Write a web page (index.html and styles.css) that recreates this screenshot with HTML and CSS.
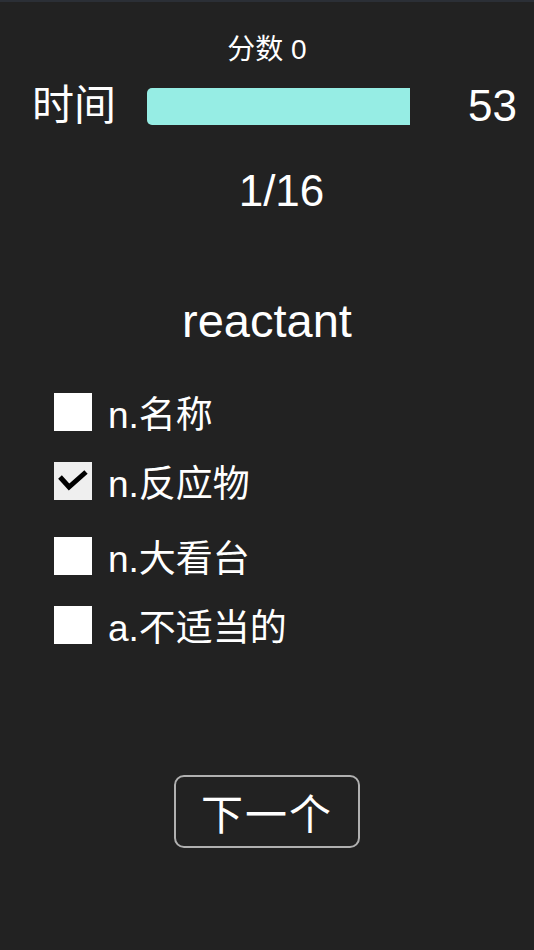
FILE: index.html
```html
<!DOCTYPE html>
<html>

<head>
  <title>单词测验</title>
  <meta charset="UTF-8">
  <link rel="stylesheet" href="styles.css">
</head>

<body>
  <div class="score">分数 0</div>
  <div class="timer">
    <span class="timer-label">时间</span>
    <div class="timer-bar"></div>
    <span class="timer-num">53</span>
  </div>
  <div class="progress">1/16</div>
  <div class="word">reactant</div>
  <ul class="options">
    <li class="option"><span class="box"></span>n.名称</li>
    <li class="option"><span class="box checked">
        <svg width="38" height="38" viewBox="0 0 38 38">
          <path d="M6 15 L15 25 L32 10" fill="none" stroke="#000" stroke-width="5" />
        </svg>
      </span>n.反应物</li>
    <li class="option"><span class="box"></span>n.大看台</li>
    <li class="option"><span class="box"></span>a.不适当的</li>
  </ul>
  <div class="actions">
    <button class="next">下一个</button>
  </div>
</body>

</html>
```

FILE: styles.css
```css
* {
  padding: 0;
  margin: 0;
  box-sizing: border-box;
}

body {
  background-color: #222222;
  border-top: 2px solid #2b2f36;
  color: #ffffff;
  font-family: "Liberation Sans", "Noto Sans CJK SC", sans-serif;
  height: 950px;
}

.score {
  margin-top: 33px;
  font-size: 28px;
  line-height: 30px;
  text-align: center;
}

.timer {
  margin-top: 21px;
  height: 40px;
  display: flex;
  align-items: center;
  padding: 0 17px 0 32px;
}

.timer-label {
  font-size: 42px;
  line-height: 40px;
}

.timer-bar {
  margin-left: 31px;
  width: 263px;
  height: 37px;
  background-color: #96ede4;
  border-radius: 5px 0 0 5px;
}

.timer-num {
  flex: 1;
  text-align: right;
  font-size: 44px;
  line-height: 40px;
}

.progress {
  margin-top: 40px;
  padding-left: 29px;
  font-size: 44px;
  line-height: 50px;
  text-align: center;
}

.word {
  margin-top: 80px;
  font-size: 47px;
  line-height: 50px;
  text-align: center;
}

.options {
  list-style: none;
  margin-top: 47px;
  padding-left: 54px;
  display: flex;
  flex-direction: column;
  gap: 31px;
}

.option {
  display: flex;
  align-items: center;
  height: 38px;
  font-size: 37px;
}

.option:nth-child(3) {
  margin-top: 6px;
}

.box {
  width: 38px;
  height: 38px;
  margin-right: 16px;
  background-color: #ffffff;
}

.box.checked {
  background-color: #efefef;
}

.box svg {
  display: block;
}

.actions {
  margin-top: 131px;
  display: flex;
  justify-content: center;
}

.next {
  width: 186px;
  height: 73px;
  margin-left: 0;
  background: transparent;
  border: 2px solid #b0b0b0;
  border-radius: 10px;
  color: #ffffff;
  font-family: "Liberation Sans", "Noto Sans CJK SC", sans-serif;
  font-size: 42px;
  letter-spacing: 2px;
}
```
